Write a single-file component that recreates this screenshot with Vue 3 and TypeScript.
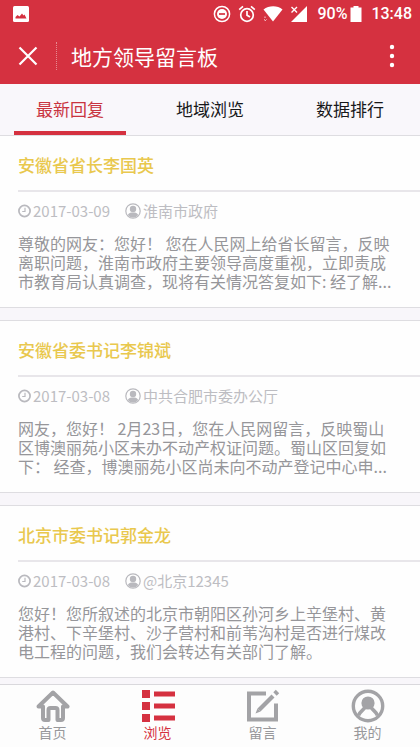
<script setup lang="ts">
import { ref } from 'vue'

interface Reply {
  title: string
  date: string
  office: string
  text: string
}

const tabs: string[] = ['最新回复', '地域浏览', '数据排行']
const activeTab = ref(0)

const replies: Reply[] = [
  {
    title: '安徽省省长李国英',
    date: '2017-03-09',
    office: '淮南市政府',
    text: '尊敬的网友：您好！ 您在人民网上给省长留言，反映离职问题，淮南市政府主要领导高度重视，立即责成市教育局认真调查，现将有关情况答复如下: 经了解...',
  },
  {
    title: '安徽省委书记李锦斌',
    date: '2017-03-08',
    office: '中共合肥市委办公厅',
    text: '网友，您好！ 2月23日，您在人民网留言，反映蜀山区博澳丽苑小区未办不动产权证问题。蜀山区回复如下： 经查，博澳丽苑小区尚未向不动产登记中心申...',
  },
  {
    title: '北京市委书记郭金龙',
    date: '2017-03-08',
    office: '@北京12345',
    text: '您好！您所叙述的北京市朝阳区孙河乡上辛堡村、黄港村、下辛堡村、沙子营村和前苇沟村是否进行煤改电工程的问题，我们会转达有关部门了解。',
  },
]
</script>

<template>
  <div class="app">
    <header class="top">
      <div class="status">
        <svg class="picture" width="16" height="16" viewBox="0 0 16 16">
          <rect width="16" height="16" rx="1.5" fill="#fff" />
          <path d="M2.500 12.500V11l2-2 2 1.500 2.500-3 1.500 2 1-1 2 4z" fill="#d53140" />
        </svg>
        <div class="signals">
          <svg width="18" height="18" viewBox="0 0 18 18" fill="none" stroke="#fff">
            <circle cx="9" cy="9" r="7.6" stroke-width="1.5" />
            <circle cx="9" cy="9" r="5" fill="#fff" stroke="none" />
            <path d="M6 9h6" stroke="#d53140" stroke-width="1.7" />
          </svg>
          <svg width="18" height="18" viewBox="0 0 18 18" fill="none" stroke="#fff" stroke-width="1.7">
            <circle cx="9" cy="10" r="6.3" />
            <path d="M9 6v4.3l3 1.8M1.2 4.6 5 1.4M16.8 4.6 13 1.4" />
          </svg>
          <svg width="20" height="18" viewBox="0 0 20 18" fill="#fff">
            <path d="M.5 4.5C6 .2 14.500.2 19.500 4.500L10 16.500z" />
            <path d="M2 11.500v1.500M1 14.500l1.500 1 1-1" fill="none" stroke="#fff" stroke-width=".8" />
          </svg>
          <svg width="18" height="18" viewBox="0 0 18 18" fill="#fff">
            <path d="M17 1v16H1z" />
            <path d="M0 0h9v9H0z" fill="#d53140" />
            <path d="m1.500 2 5.500 5.500M7 2 1.500 7.500" stroke="#fff" stroke-width="1.4" />
          </svg>
          <span class="percent">90%</span>
          <svg class="battery" width="12" height="18" viewBox="0 0 12 18">
            <path d="M.5 2.500h3V1h5v1.500h3V17H.5z" fill="#fff" />
          </svg>
          <time class="clock">13:48</time>
        </div>
      </div>
      <div class="bar">
        <button class="icon-button close" type="button" aria-label="关闭">
          <svg width="20" height="20" viewBox="0 0 20 20" fill="none" stroke="#fff" stroke-width="2.2">
            <path d="m1.500 1.500 17 17M18.500 1.500l-17 17" />
          </svg>
        </button>
        <h1>地方领导留言板</h1>
        <button class="icon-button" type="button" aria-label="更多">
          <svg width="6" height="24" viewBox="0 0 6 24" fill="#fff">
            <circle cx="3" cy="3" r="2.200" />
            <circle cx="3" cy="12" r="2.200" />
            <circle cx="3" cy="21" r="2.200" />
          </svg>
        </button>
      </div>
    </header>

    <nav class="tabs">
      <button
        v-for="(tab, i) in tabs"
        :key="tab"
        type="button"
        class="tab"
        :class="{ active: activeTab === i }"
        @click="activeTab = i"
      >
        {{ tab }}
      </button>
    </nav>

    <main class="list">
      <article v-for="reply in replies" :key="reply.title" class="card">
        <h2>{{ reply.title }}</h2>
        <div class="meta">
          <span class="item">
            <svg width="13" height="14" viewBox="0 0 13 14" fill="none" stroke="#b9b9be">
              <circle cx="6.500" cy="7" r="5.600" stroke-width="1.700" />
              <path d="M7 3.800v3.700H4.200" stroke-width="1.200" />
            </svg>
            <time>{{ reply.date }}</time>
          </span>
          <span class="item">
            <svg width="16" height="16" viewBox="0 0 16 16">
              <circle cx="8" cy="8" r="7.200" fill="none" stroke="#b9b9be" stroke-width="1.200" />
              <circle cx="8" cy="6" r="3.200" fill="#b9b9be" />
              <path d="M2.800 12c.6-1.700 2.200-2.300 3.600-2.500h3.200c1.400.2 3 .8 3.600 2.500A6.600 6.600 0 0 1 2.800 12z" fill="#b9b9be" />
            </svg>
            <span>{{ reply.office }}</span>
          </span>
        </div>
        <p>{{ reply.text }}</p>
      </article>
    </main>

    <nav class="bottom">
      <a href="#home">
        <svg width="34" height="34" viewBox="0 0 34 34" fill="none" stroke="#a3a3a6" stroke-width="4" stroke-linejoin="round" stroke-linecap="round">
          <path d="M2.500 17.500 17 3.500l14.500 14H27V29q0 2-2 2h-3.500V21q0-2-2-2h-5q-2 0-2 2v10H9q-2 0-2-2V17.500z" />
        </svg>
        <span>首页</span>
      </a>
      <a href="#browse" class="current">
        <svg width="34" height="34" viewBox="0 0 34 34" fill="#d53140">
          <path d="M1 1h8v8H1zM1 13h8v8H1zM1 25h8v8H1zM13 2.500h21v5H13zM13 14.500h21v5H13zM13 26.500h21v5H13z" />
        </svg>
        <span>浏览</span>
      </a>
      <a href="#message">
        <svg width="34" height="34" viewBox="0 0 34 34" fill="none" stroke="#a3a3a6">
          <path d="M20 4.500H3v26h27V14.500" stroke-width="4" />
          <path d="M13 21 27 7" stroke-width="4.200" />
          <path d="m29 5 2.500-2.500" stroke-width="4.800" />
          <path d="m9.500 24.500 2-5 3 3z" fill="#a3a3a6" stroke="none" />
        </svg>
        <span>留言</span>
      </a>
      <a href="#mine">
        <svg width="34" height="34" viewBox="0 0 34 34" fill="none" stroke="#a3a3a6" stroke-width="3.400">
          <circle cx="17" cy="17" r="14.700" />
          <circle cx="17" cy="14" r="6.600" fill="#a3a3a6" stroke="none" />
          <path d="M14 18c-1 3-5 4-6.500 8.500M20 18c1 3 5 4 6.500 8.500" stroke-width="3.600" />
        </svg>
        <span>我的</span>
      </a>
    </nav>
  </div>
</template>

<style>
body {
  margin: 0;
  background: #f8f6fa;
}
</style>

<style scoped>
.app {
  display: flex;
  flex-direction: column;
  height: 100vh;
  font-family: "Noto Sans CJK SC", sans-serif;
  background: #f8f6fa;
}

svg {
  display: block;
  flex: none;
}

button {
  padding: 0;
  border: 0;
  background: none;
  font: inherit;
  color: inherit;
  cursor: pointer;
}

.top {
  flex: none;
  background: #d53140;
  color: #fff;
}

.status {
  display: flex;
  align-items: center;
  justify-content: space-between;
  height: 28px;
  padding: 0 8px 0 13px;
  font: 500 16px/20px Roboto, sans-serif;
}

.signals {
  display: flex;
  align-items: center;
  gap: 7px;
}

.percent {
  margin-left: 2px;
}

.battery {
  margin-left: -4px;
}

.clock {
  margin-left: 2px;
}

.bar {
  display: flex;
  align-items: center;
  height: 56px;
  padding-right: 17px;
}

.icon-button {
  display: flex;
  align-items: center;
  justify-content: center;
  width: 22px;
  height: 28px;
}

.close {
  width: 57px;
  border-right: 1px dotted #e58a91;
}

h1 {
  flex: 1;
  margin: 0;
  padding-left: 14px;
  font-size: 21px;
  font-weight: 400;
  line-height: 28px;
}

.tabs {
  flex: none;
  display: grid;
  grid-template-columns: repeat(3, 1fr);
  height: 51px;
  background: #f9f7fb;
}

.tab {
  display: flex;
  flex-direction: column;
  align-items: center;
  padding-top: 12px;
  font-size: 17px;
  line-height: 26px;
  color: #18181a;
}

.tab::after {
  content: "";
  width: 80%;
  height: 4px;
  margin-top: auto;
}

.tab.active {
  color: #c93440;
}

.tab.active::after {
  background: #d53140;
}

.list {
  flex: 1;
  min-height: 0;
  overflow-y: auto;
  display: flex;
  flex-direction: column;
  gap: 12px;
}

.card {
  flex: none;
  padding: 1px 0 16px 18px;
  border-top: 1px solid #dedde1;
  border-bottom: 1px solid #dedde1;
  background: #fefefe;
}

h2 {
  margin: 0;
  padding: 15px 0 12px;
  border-bottom: 2px solid #e8e6ea;
  font-size: 17px;
  font-weight: 500;
  line-height: 26px;
  color: #e9c84e;
}

.meta {
  display: flex;
  gap: 15px;
  padding-top: 9px;
  font-size: 15px;
  line-height: 20px;
  color: #bdbdc2;
}

.item {
  display: flex;
  align-items: center;
  gap: 2px;
}

p {
  margin: 13px 28px 0 0;
  font-size: 16px;
  line-height: 19px;
  color: #96969a;
}

.bottom {
  flex: none;
  display: grid;
  grid-template-columns: repeat(4, 1fr);
  padding: 4px 0 5px;
  border-top: 1px solid #d9d8dc;
  background: #fdfdfd;
}

.bottom a {
  display: flex;
  flex-direction: column;
  align-items: center;
  font-size: 14px;
  line-height: 19px;
  color: #98989b;
  text-decoration: none;
}

.bottom a.current {
  color: #d53140;
}
</style>
